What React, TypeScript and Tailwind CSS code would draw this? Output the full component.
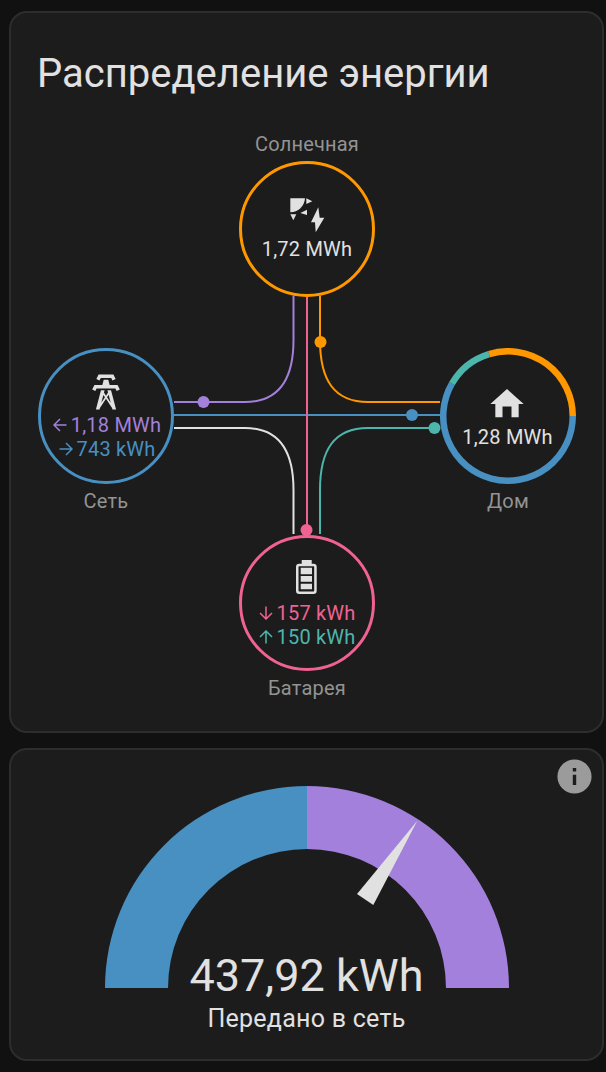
import type { ReactNode } from "react";

const solarIcon = (
  <svg viewBox="0 0 36 36" className="h-9 w-9 fill-[#e1e1e1]">
    <path d="M1.3 1.3H16A15 15 0 0 1 1.3 15.3Z" />
    <path d="M17.3 1.3L23.3 4.3L17.3 7Z" />
    <path d="M11.3 16L18 12.7V18Z" />
    <path d="M1.3 17.3H7.3L4.3 23.3Z" />
    <path d="M29.3 10.3L22 25.3H26L26.7 35.3L35.3 20.7H30.7Z" />
  </svg>
);

const towerIcon = (
  <svg viewBox="0 0 24 24" className="h-[42px] w-[42px] fill-[#e1e1e1]">
    <path d="M8.28,5.45L6.5,4.55L7.76,2H16.24L17.5,4.55L15.72,5.44L15,4H9L8.28,5.45M18.62,8H14.09L13.3,5H10.7L9.91,8H5.38L4.1,10.55L5.89,11.44L6.62,10H17.38L18.1,11.45L19.89,10.56L18.62,8M17.77,22H15.7L15.46,21.1L12,15.9L8.53,21.1L8.3,22H6.23L9.12,11H11.19L10.83,12.35L12,14.1L13.16,12.35L12.81,11H14.88L17.77,22M11.4,15L10.5,13.65L9.32,18.13L11.4,15M14.68,18.12L13.5,13.64L12.6,15L14.68,18.12Z" />
  </svg>
);

const homeIcon = (
  <svg viewBox="0 0 24 24" className="mr-[3px] h-10 w-10 fill-[#e1e1e1]">
    <path d="M9.3,20V13.5H14.7V20H19V12H22L12,3L2,12H5V20H9.3Z" />
  </svg>
);

const batteryIcon = (
  <svg viewBox="0 0 40 40" className="h-10 w-10">
    <path d="M14.7 3H24.7V7H14.7Z" className="fill-[#e1e1e1]" />
    <rect x="10.25" y="8" width="18.2" height="27.8" rx="2" className="fill-none stroke-[#e1e1e1] stroke-[2.5]" />
    <path d="M13.7 10.7H25V17.3H13.7ZM13.7 19H25V24.7H13.7ZM13.7 26.7H25V32.3H13.7Z" className="fill-[#e1e1e1]" />
  </svg>
);

function Arrow({ d }: { d: string }) {
  return (
    <svg viewBox="0 0 14 14" className="h-3.5 w-3.5 fill-none stroke-current stroke-[1.5]">
      <path d={d} />
    </svg>
  );
}

const arrowLeft = "M13.5 7H1M7 1L1 7L7 13";
const arrowRight = "M.5 7H13M7 1L13 7L7 13";
const arrowDown = "M7 .5V13M1 7L7 13L13 7";
const arrowUp = "M7 13.5V1M1 7L7 1L13 7";

function Line({ color, arrow, children }: { color: string; arrow: string; children: ReactNode }) {
  return (
    <div className={`flex h-6 items-center gap-1 ${color}`}>
      <Arrow d={arrow} />
      <span>{children}</span>
    </div>
  );
}

function Circle({ border, children }: { border: string; children: ReactNode }) {
  return (
    <div
      className={`relative flex h-[136px] w-[136px] flex-col items-center justify-center rounded-full text-[20px] leading-6 tracking-[0.2px] ${border}`}
    >
      {children}
    </div>
  );
}

function Label({ children }: { children: ReactNode }) {
  return <div className="h-6 text-center text-[20px] leading-6 tracking-[0.2px] text-[#939393]">{children}</div>;
}

function FlowLines() {
  return (
    <svg viewBox="9 11 595 722" className="pointer-events-none absolute -inset-[2px] h-[722px] w-[595px] fill-none stroke-2">
      <path d="M293.5 296V340C293.5 380 279 402 245 402H174" className="stroke-[#a280db]" />
      <path d="M320 296V340C320 380 334 402 368 402H440" className="stroke-[#ff9800]" />
      <path d="M174 415H440" className="stroke-[#488fc2]" />
      <path d="M307 296V536" className="stroke-[#f06292]" />
      <path d="M293.5 534V490C293.5 450 279 428 245 428H174" className="stroke-[#e1e1e1]" />
      <path d="M320 534V490C320 450 334 428 368 428H440" className="stroke-[#4db6ac]" />
      <circle cx="203.5" cy="402" r="6" className="fill-[#a280db] stroke-none" />
      <circle cx="320.5" cy="342" r="6" className="fill-[#ff9800] stroke-none" />
      <circle cx="412" cy="415" r="6" className="fill-[#488fc2] stroke-none" />
      <circle cx="434.5" cy="428" r="6" className="fill-[#4db6ac] stroke-none" />
      <circle cx="306.5" cy="530" r="6" className="fill-[#f06292] stroke-none" />
    </svg>
  );
}

function HomeRing() {
  // angles measured clockwise from the top of the circle
  const point = (deg: number) => {
    const rad = (deg * Math.PI) / 180;
    return `${(68 + 64.75 * Math.sin(rad)).toFixed(2)} ${(68 - 64.75 * Math.cos(rad)).toFixed(2)}`;
  };
  const arc = (from: number, to: number) =>
    `M${point(from)}A64.75 64.75 0 ${to - from > 180 ? 1 : 0} 1 ${point(to)}`;

  return (
    <svg viewBox="0 0 136 136" className="absolute inset-0 h-[136px] w-[136px] fill-none stroke-[6.5]">
      <path d={arc(90, 300)} className="stroke-[#488fc2]" />
      <path d={arc(300, 343)} className="stroke-[#4db6ac]" />
      <path d={arc(343, 450)} className="stroke-[#ff9800]" />
    </svg>
  );
}

function EnergyCard() {
  return (
    <section className="relative rounded-[18px] border-2 border-[#2d2d2d] bg-[#1c1c1c] pb-[31px] pl-[27px] pr-[26px] pt-[37px]">
      <FlowLines />
      <h1 className="-ml-px h-12 whitespace-nowrap text-[40px] leading-[48px] font-normal text-[#e1e1e1]">
        Распределение энергии
      </h1>

      <div className="relative mt-[34px] flex flex-col items-center">
        <Label>Солнечная</Label>
        <div className="mt-[5px]">
          <Circle border="border-[3px] border-[#ff9800]">
            {solarIcon}
            <div className="mt-1 text-[#e1e1e1]">1,72 MWh</div>
          </Circle>
        </div>
      </div>

      <div className="relative mt-[51px] flex justify-between">
        <div className="flex flex-col items-center">
          <Circle border="border-[3px] border-[#488fc2]">
            {towerIcon}
            <div className="ml-[2px] flex flex-col items-center">
              <Line color="text-[#a280db]" arrow={arrowLeft}>1,18 MWh</Line>
              <Line color="text-[#488fc2]" arrow={arrowRight}>743 kWh</Line>
            </div>
          </Circle>
          <div className="mt-[5px]">
            <Label>Сеть</Label>
          </div>
        </div>
        <div className="flex flex-col items-center">
          <Circle border="">
            <HomeRing />
            {homeIcon}
            <div className="mt-px mr-px text-[#e1e1e1]">1,28 MWh</div>
          </Circle>
          <div className="mt-[5px]">
            <Label>Дом</Label>
          </div>
        </div>
      </div>

      <div className="relative mt-[22px] flex flex-col items-center">
        <Circle border="border-[3px] border-[#f06292]">
          {batteryIcon}
          <div className="mt-1">
            <Line color="text-[#f06292]" arrow={arrowDown}>157 kWh</Line>
            <Line color="text-[#4db6ac]" arrow={arrowUp}>150 kWh</Line>
          </div>
        </Circle>
        <div className="mt-[5px]">
          <Label>Батарея</Label>
        </div>
      </div>
    </section>
  );
}

function GaugeCard() {
  return (
    <section className="relative mt-[15px] rounded-[18px] border-2 border-[#2d2d2d] bg-[#1c1c1c] pb-[28px] pt-[36px]">
      <svg viewBox="0 0 24 24" className="absolute right-[7px] top-[5.5px] h-[41px] w-[41px] fill-[#9b9b9b]">
        <path d="M13,9H11V7H13M13,17H11V11H13M12,2A10,10 0 0,0 2,12A10,10 0 0,0 12,22A10,10 0 0,0 12,2A10,10 0 0,0 12,2Z" />
      </svg>
      <svg viewBox="0 0 404 202" className="mx-auto h-[202px] w-[404px]">
        <path d="M0 202A202 202 0 0 1 202 0V63A139 139 0 0 0 63 202Z" className="fill-[#488fc2]" />
        <path d="M202 0A202 202 0 0 1 404 202H341A139 139 0 0 0 202 63Z" className="fill-[#a280db]" />
        <path d="M312.3 34.7L252 108L268.3 119Z" className="fill-[#e1e1e1]" />
      </svg>
      <div className="absolute inset-x-0 top-[198px] text-center text-[45px] leading-[56px] text-[#e1e1e1]">
        437,92 kWh
      </div>
      <div className="mt-[19px] h-6 text-center text-[25px] leading-6 tracking-[0.25px] text-[#e1e1e1]">
        Передано в сеть
      </div>
    </section>
  );
}

export default function App() {
  return (
    <main className="min-h-[1072px] w-[606px] bg-[#111111] pl-[9px] pr-[2px] pt-[11px] font-['Roboto',sans-serif]">
      <EnergyCard />
      <GaugeCard />
    </main>
  );
}
